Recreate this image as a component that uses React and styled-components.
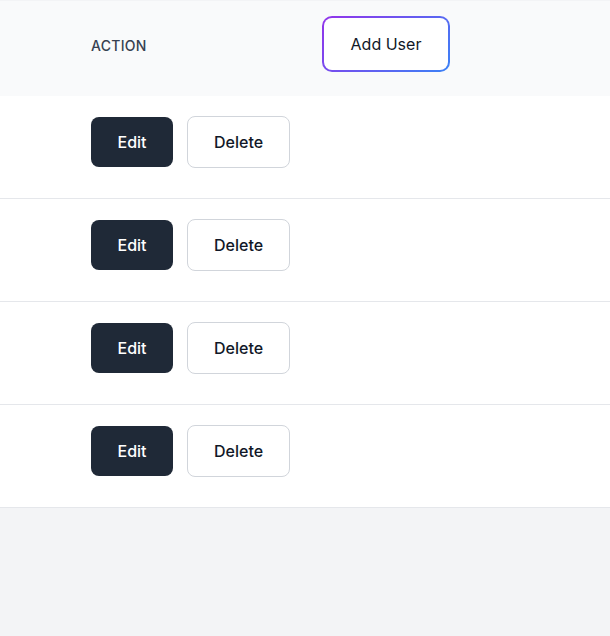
import React from "react";
import styled, { createGlobalStyle } from "styled-components";

const Global = createGlobalStyle`
  html, body { margin: 0; padding: 0; background: #f3f4f6; }
  body { font-family: Inter, "Noto Sans", sans-serif; }
`;

const Table = styled.div`
  width: 610px;
  background: #ffffff;
  border-top: 1px solid #f3f4f6;
  border-bottom: 1px solid #e5e7eb;
`;

const Cols = styled.div`
  display: grid;
  grid-template-columns: 91px 231px 1fr;
  align-items: start;
`;

const HeadRow = styled(Cols)`
  background: #f9fafb;
  height: 95px;
`;

const HeadLabel = styled.span`
  grid-column: 2;
  margin-top: 36px;
  font-size: 14px;
  line-height: 17px;
  font-weight: 500;
  letter-spacing: 0.3px;
  color: #374151;
  text-transform: uppercase;
`;

const AddButton = styled.button`
  grid-column: 3;
  justify-self: start;
  margin-top: 15px;
  width: 128px;
  height: 56px;
  border: 2px solid transparent;
  border-radius: 10px;
  background:
    linear-gradient(#fff, #fff) padding-box,
    linear-gradient(135deg, #9333ea, #3b82f6) border-box;
  font-family: inherit;
  font-size: 16px;
  color: #111827;
  cursor: pointer;
`;

const Row = styled(Cols)`
  height: 102px;
  & + & { border-top: 1px solid #e5e7eb; }
`;

const Actions = styled.div`
  grid-column: 2;
  display: flex;
  align-items: center;
  gap: 14px;
  padding-top: 20px;
`;

const Btn = styled.button`
  font-family: inherit;
  font-size: 16px;
  font-weight: 500;
  line-height: 24px;
  border-radius: 8px;
  cursor: pointer;
  padding: ${(p) => (p.$dark ? "13px 26.5px" : "13px 26px")};
  border: ${(p) => (p.$dark ? "none" : "1px solid #d1d5db")};
  background: ${(p) => (p.$dark ? "#1f2937" : "#ffffff")};
  color: ${(p) => (p.$dark ? "#ffffff" : "#111827")};
`;

export default function App() {
  return (
    <>
      <Global />
      <Table>
        <HeadRow>
          <HeadLabel>Action</HeadLabel>
          <AddButton>Add User</AddButton>
        </HeadRow>
        {[0, 1, 2, 3].map((i) => (
          <Row key={i}>
            <Actions>
              <Btn $dark>Edit</Btn>
              <Btn>Delete</Btn>
            </Actions>
          </Row>
        ))}
      </Table>
    </>
  );
}
